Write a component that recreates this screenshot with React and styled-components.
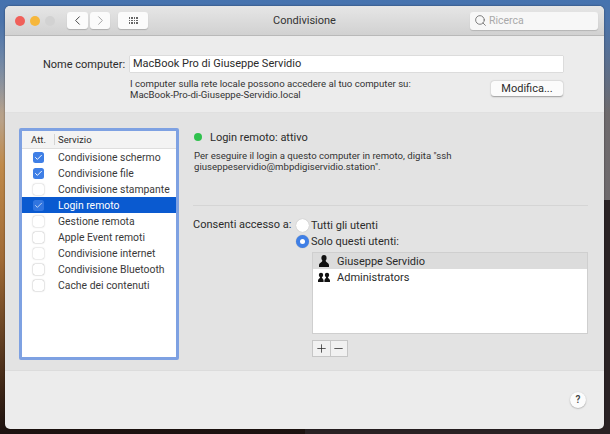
import styled, { createGlobalStyle } from 'styled-components'
import { Search, ChevronLeft, ChevronRight, Check, Plus, Minus } from 'lucide-react'

const GlobalStyle = createGlobalStyle`
  * { box-sizing: border-box; }
  html, body { margin: 0; height: 100%; }
  body {
    width: 610px;
    height: 434px;
    overflow: hidden;
    font-family: "Roboto", "Liberation Sans", sans-serif;
    color: #2b2b2b;
    background:
      linear-gradient(180deg, rgba(70,115,175,1) 0, rgba(75,115,170,1) 5%, transparent 26%),
      linear-gradient(90deg, transparent 50%, #8b8d94 50%, #6e6a6c 100%) 0 0 / 100% 200px no-repeat,
      linear-gradient(90deg, transparent 50%, #2a2224 50%) 0 200px / 100% 234px no-repeat,
      linear-gradient(180deg, #8da3b8 0, #b9a187 28%, #c08a4a 38%, #a06a35 60%, #3c2516 90%, #1c1210 100%);
  }
`
const Desktop = styled.div`
  width: 610px;
  height: 434px;
  padding: 6px 6px 5px 5px;
`
const Window = styled.div`
  height: 423px;
  display: flex;
  flex-direction: column;
  background: #ececec;
  border-radius: 5px;
  overflow: hidden;
  box-shadow: 0 0 2px rgba(0,0,0,.5);
`
const TitleBar = styled.div`
  position: relative;
  height: 30px;
  flex: none;
  display: flex;
  align-items: center;
  padding-left: 10px;
  background: linear-gradient(180deg, #e6e6e6, #d1d1d1);
  border-bottom: 1px solid #b9b9b9;
`
const Light = styled.span`
  width: 10px;
  height: 10px;
  border-radius: 50%;
  margin-right: 5px;
  background: ${p => p.$color};
`
const ToolButton = styled.div`
  width: ${p => p.$w}px;
  height: 17px;
  margin-left: ${p => p.$ml}px;
  display: flex;
  align-items: center;
  justify-content: center;
  background: #fbfbfb;
  border-radius: 3px;
  color: ${p => p.$dim ? '#a5a5a5' : '#4a4a4a'};
  box-shadow: 0 1px 1px rgba(0,0,0,.18);
`
const Dots = styled.div`
  display: grid;
  grid-template-columns: repeat(4, 1.5px);
  gap: 1px;
  span { width: 1.5px; height: 1.5px; background: #666; }
`
const Title = styled.div`
  position: absolute;
  left: 0;
  right: 0;
  top: 8px;
  text-align: center;
  font-size: 11px;
  color: #333;
`
const SearchBox = styled.div`
  margin-left: auto;
  margin-right: 6px;
  width: 128px;
  height: 18px;
  display: flex;
  align-items: center;
  gap: 2px;
  padding-left: 4px;
  background: #f7f7f7;
  border-radius: 3px;
  font-size: 10.5px;
  color: #a9a9a9;
  box-shadow: 0 1px 1px rgba(0,0,0,.15);
  svg { color: #666; }
`
const TopSection = styled.div`
  height: 76px;
  flex: none;
  padding: 20px 41px 0 38px;
`
const NameRow = styled.div`
  display: flex;
  align-items: center;
  gap: 6px;
`
const NameLabel = styled.label`
  width: 81px;
  text-align: right;
  white-space: nowrap;
  font-size: 11px;
`
const NameField = styled.div`
  flex: 1;
  height: 16px;
  line-height: 16px;
  padding-left: 3px;
  background: #fff;
  font-size: 11px;
  box-shadow: 0 0 1px rgba(0,0,0,.4);
`
const InfoRow = styled.div`
  display: flex;
  justify-content: space-between;
  margin: 6px 0 0 87px;
`
const SmallText = styled.div`
  font-size: 9.6px;
  line-height: 11px;
  color: #333;
`
const Button = styled.div`
  width: 72px;
  height: 15px;
  margin-top: 3px;
  line-height: 15px;
  text-align: center;
  font-size: 11px;
  background: #fbfbfb;
  border-radius: 3px;
  box-shadow: 0 0.5px 1.5px rgba(0,0,0,.35);
`
const Inset = styled.div`
  height: 259px;
  flex: none;
  display: flex;
  padding: 15px 16px 12px 14px;
  background: #e3e3e3;
  border-top: 1px solid #e0e0e0;
  border-bottom: 1px solid #dcdcdc;
`
const ServicePanel = styled.div`
  width: 160px;
  height: 232px;
  flex: none;
  background: #fff;
  border: 3px solid #7ea1e2;
  border-radius: 2px;
`
const ListHead = styled.div`
  height: 18px;
  display: flex;
  align-items: center;
  font-size: 9.6px;
  background: #f3f3f3;
  border-bottom: 1px solid #dedede;
  span:first-child {
    width: 33px;
    padding-left: 9px;
    border-right: 1px solid #d4d4d4;
  }
  span:last-child { padding-left: 3px; }
`
const ServiceRow = styled.div`
  height: 16px;
  display: flex;
  align-items: center;
  font-size: 10.4px;
  white-space: nowrap;
  color: ${p => p.$selected ? '#fff' : '#3a3a3a'};
  background: ${p => p.$selected ? '#0a5ad0' : 'transparent'};
`
const CheckBox = styled.span`
  width: 11px;
  height: 11px;
  margin: 0 14px 0 11px;
  flex: none;
  display: flex;
  align-items: center;
  justify-content: center;
  border-radius: 2.5px;
  color: #fff;
  background: ${p => p.$on ? '#3f7fe6' : '#fff'};
  box-shadow: ${p => p.$on ? 'none' : '0 0 1.5px rgba(0,0,0,.5)'};
  opacity: ${p => p.$faded ? 0.75 : 1};
`
const DetailPane = styled.div`
  flex: 1;
  padding: 1px 0 0 14px;
  display: flex;
  flex-direction: column;
`
const Status = styled.div`
  display: flex;
  align-items: center;
  gap: 8px;
  height: 16px;
  padding-left: 1px;
  font-size: 11px;
`
const GreenDot = styled.span`
  width: 8px;
  height: 8px;
  border-radius: 50%;
  background: #2fc14d;
`
const Description = styled(SmallText)`
  margin: 5px 0 0 1px;
  height: 47px;
`
const Divider = styled.div`
  height: 1px;
  margin-top: 8px;
  background: #d5d5d5;
`
const Access = styled.div`
  display: flex;
  margin-top: 11px;
  font-size: 11px;
`
const AccessLabel = styled.div`
  width: 103px;
  flex: none;
  padding-top: 1px;
  white-space: nowrap;
`
const AccessOptions = styled.div`
  flex: 1;
`
const RadioRow = styled.div`
  height: 16px;
  display: flex;
  align-items: center;
  gap: 2px;
`
const Radio = styled.span`
  width: 13px;
  height: 13px;
  border-radius: 50%;
  display: flex;
  align-items: center;
  justify-content: center;
  background: ${p => p.$on ? '#3f7fe6' : '#fff'};
  box-shadow: 0 0 1px rgba(0,0,0,.3);
  &::after {
    content: '';
    width: 5px;
    height: 5px;
    border-radius: 50%;
    background: ${p => p.$on ? '#fff' : 'transparent'};
  }
`
const UserList = styled.div`
  margin: 3px 0 0 16px;
  height: 82px;
  background: #fff;
  border: 1px solid #cfcfcf;
`
const UserRow = styled.div`
  height: 16px;
  display: flex;
  align-items: center;
  gap: 6px;
  padding-left: 4px;
  font-size: 11px;
  background: ${p => p.$selected ? '#dcdcdc' : 'transparent'};
`
const PlusMinus = styled.div`
  margin: 6px 0 0 16px;
  width: 36px;
  height: 17px;
  display: flex;
  border: 1px solid #c6c6c6;
  background: #f1f1f1;
  color: #2a2a2a;
  div {
    flex: 1;
    display: flex;
    align-items: center;
    justify-content: center;
  }
  div:first-child { border-right: 1px solid #c6c6c6; }
`
const Footer = styled.div`
  flex: 1;
  display: flex;
  justify-content: flex-end;
  align-items: flex-start;
  padding: 21px 18px 0 0;
`
const Help = styled.div`
  width: 16px;
  height: 16px;
  line-height: 16px;
  border-radius: 50%;
  text-align: center;
  font-size: 10px;
  font-weight: 600;
  color: #444;
  background: #fcfcfc;
  box-shadow: 0 0.5px 1.5px rgba(0,0,0,.35);
`

const PersonIcon = ({ double }) => (
  <svg width="14" height="12" viewBox="0 0 14 12" fill="#111">
    {double ? (
      <>
        <circle cx="4" cy="4" r="2.2" />
        <circle cx="10" cy="4" r="2.2" />
        <path d="M1 11V9.5C1 8 3 7.5 3.2 6h1.6C5 7.5 6.6 8 6.6 9.5V11zM7.4 11V9.5C7.4 8 9 7.5 9.2 6h1.6C11 7.5 13 8 13 9.5V11z" />
      </>
    ) : (
      <>
        <ellipse cx="7" cy="3" rx="2.6" ry="3" />
        <path d="M2 12V10C2 8.2 5 7.8 5.6 5h2.8C9 7.8 12 8.2 12 10v2z" />
      </>
    )}
  </svg>
)

const services = [
  { name: 'Condivisione schermo', on: true },
  { name: 'Condivisione file', on: true },
  { name: 'Condivisione stampante', faded: true },
  { name: 'Login remoto', on: true, selected: true },
  { name: 'Gestione remota', faded: true },
  { name: 'Apple Event remoti' },
  { name: 'Condivisione internet', faded: true },
  { name: 'Condivisione Bluetooth' },
  { name: 'Cache dei contenuti' },
]

export default function App() {
  return (
    <>
      <GlobalStyle />
      <Desktop>
        <Window>
          <TitleBar>
            <Light $color="#f0605a" />
            <Light $color="#f6b73c" />
            <Light $color="#d2d2d2" />
            <ToolButton $w={21} $ml={7}><ChevronLeft size={15} strokeWidth={1.6} /></ToolButton>
            <ToolButton $w={20} $ml={2} $dim><ChevronRight size={15} strokeWidth={1.6} /></ToolButton>
            <ToolButton $w={30} $ml={8}>
              <Dots>{Array.from({ length: 12 }, (_, i) => <span key={i} />)}</Dots>
            </ToolButton>
            <Title>Condivisione</Title>
            <SearchBox><Search size={13} strokeWidth={1.5} />Ricerca</SearchBox>
          </TitleBar>
          <TopSection>
            <NameRow>
              <NameLabel>Nome computer:</NameLabel>
              <NameField>MacBook Pro di Giuseppe Servidio</NameField>
            </NameRow>
            <InfoRow>
              <SmallText>
                I computer sulla rete locale possono accedere al tuo computer su:<br />
                MacBook-Pro-di-Giuseppe-Servidio.local
              </SmallText>
              <Button>Modifica...</Button>
            </InfoRow>
          </TopSection>
          <Inset>
            <ServicePanel>
              <ListHead><span>Att.</span><span>Servizio</span></ListHead>
              {services.map(s => (
                <ServiceRow key={s.name} $selected={s.selected}>
                  <CheckBox $on={s.on} $faded={s.faded || s.selected}>
                    {s.on && <Check size={9} strokeWidth={2.5} />}
                  </CheckBox>
                  {s.name}
                </ServiceRow>
              ))}
            </ServicePanel>
            <DetailPane>
              <Status><GreenDot />Login remoto: attivo</Status>
              <Description>
                Per eseguire il login a questo computer in remoto, digita "ssh<br />
                giuseppeservidio@mbpdigiservidio.station".
              </Description>
              <Divider />
              <Access>
                <AccessLabel>Consenti accesso a:</AccessLabel>
                <AccessOptions>
                  <RadioRow><Radio />Tutti gli utenti</RadioRow>
                  <RadioRow><Radio $on />Solo questi utenti:</RadioRow>
                  <UserList>
                    <UserRow $selected><PersonIcon />Giuseppe Servidio</UserRow>
                    <UserRow><PersonIcon double />Administrators</UserRow>
                  </UserList>
                  <PlusMinus>
                    <div><Plus size={13} strokeWidth={1.4} /></div>
                    <div><Minus size={13} strokeWidth={1.4} /></div>
                  </PlusMinus>
                </AccessOptions>
              </Access>
            </DetailPane>
          </Inset>
          <Footer><Help>?</Help></Footer>
        </Window>
      </Desktop>
    </>
  )
}
